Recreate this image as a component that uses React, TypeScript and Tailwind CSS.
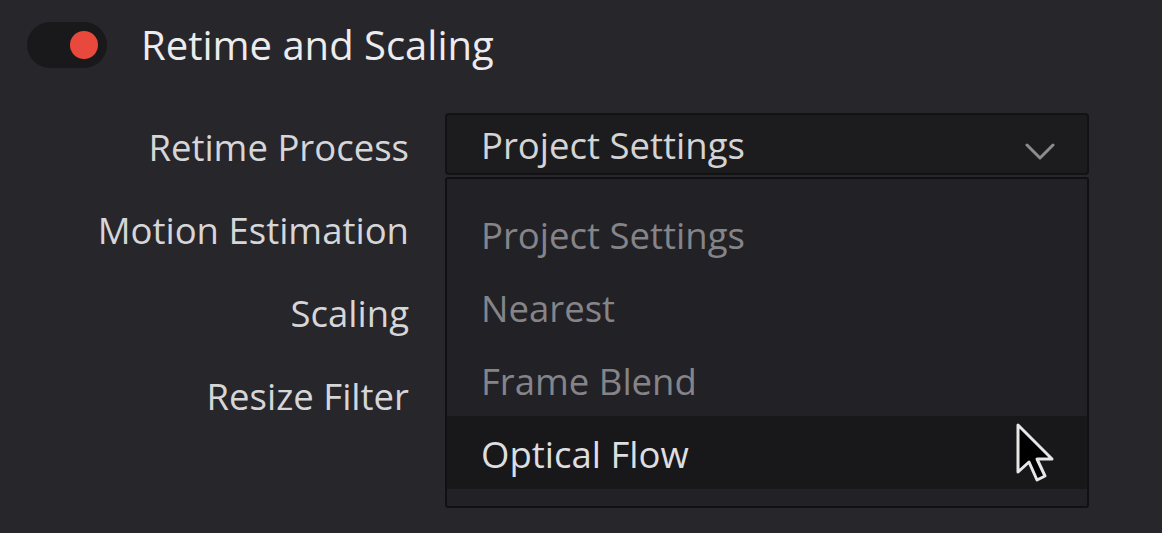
import React from 'react';

const labels = ['Retime Process', 'Motion Estimation', 'Scaling', 'Resize Filter'];
const options = ['Project Settings', 'Nearest', 'Frame Blend', 'Optical Flow'];

export default function App() {
  const active = 3;

  return (
    <div
      className="w-[1162px] h-[533px] overflow-hidden bg-[#27262b] text-[#d6d6d8]"
      style={{ fontFamily: '"Open Sans", "Noto Sans", sans-serif' }}
    >
      {/* Header */}
      <div className="flex items-center pl-[27px] pt-[22px] h-[46px] box-content">
        <div className="w-[80px] h-[46px] rounded-full bg-[#19191b] flex items-center justify-end pr-[9px]">
          <div className="w-[28px] h-[28px] rounded-full bg-[#e8493c]" />
        </div>
        <span className="ml-[34px] text-[40px] leading-none text-[#ececee]">Retime and Scaling</span>
      </div>

      {/* Form */}
      <div className="grid grid-cols-[409px_644px] gap-x-[36px] mt-[45px]">
        <div className="flex flex-col">
          {labels.map((l) => (
            <div key={l} className="h-[83px] flex items-start justify-end text-[36.5px] leading-none pt-[16px]">
              {l}
            </div>
          ))}
        </div>

        <div className="relative">
          <div className="h-[62px] rounded-[4px] bg-[#1c1c1e] border-2 border-[#121213] flex items-center justify-between pl-[34px] pr-[32px]">
            <span className="text-[36.5px] leading-none text-[#d4d4d6] mt-[2px]">Project Settings</span>
            <svg className="mt-[16px]" width="30" height="18" viewBox="0 0 30 18" fill="none" stroke="#8c8c8e" strokeWidth="3" strokeLinecap="round" strokeLinejoin="round">
              <path d="M2 2 L15 15 L28 2" />
            </svg>
          </div>

          <div className="absolute left-0 right-0 top-[64px] h-[331px] bg-[#222126] border-2 border-[#111112] rounded-[3px] pt-[18px]">
            {options.map((o, i) => (
              <div
                key={o}
                className={`relative h-[73px] flex items-center pl-[34px] text-[36.5px] leading-none ${
                  i === active ? 'bg-[#18181a] text-[#dedee0]' : 'text-[#858589]'
                }`}
              >
                <span className="mt-[4px]">{o}</span>
                {i === active && (
                  <svg className="absolute left-[568px] top-[6px]" width="40" height="62" viewBox="0 0 40 62">
                    <path
                      d="M3 3 L3 50 L14 40 L22 58 L30 54 L22 37 L37 37 Z"
                      fill="#000"
                      stroke="#e6e6e6"
                      strokeWidth="3"
                      strokeLinejoin="round"
                    />
                  </svg>
                )}
              </div>
            ))}
          </div>
        </div>
      </div>
    </div>
  );
}
